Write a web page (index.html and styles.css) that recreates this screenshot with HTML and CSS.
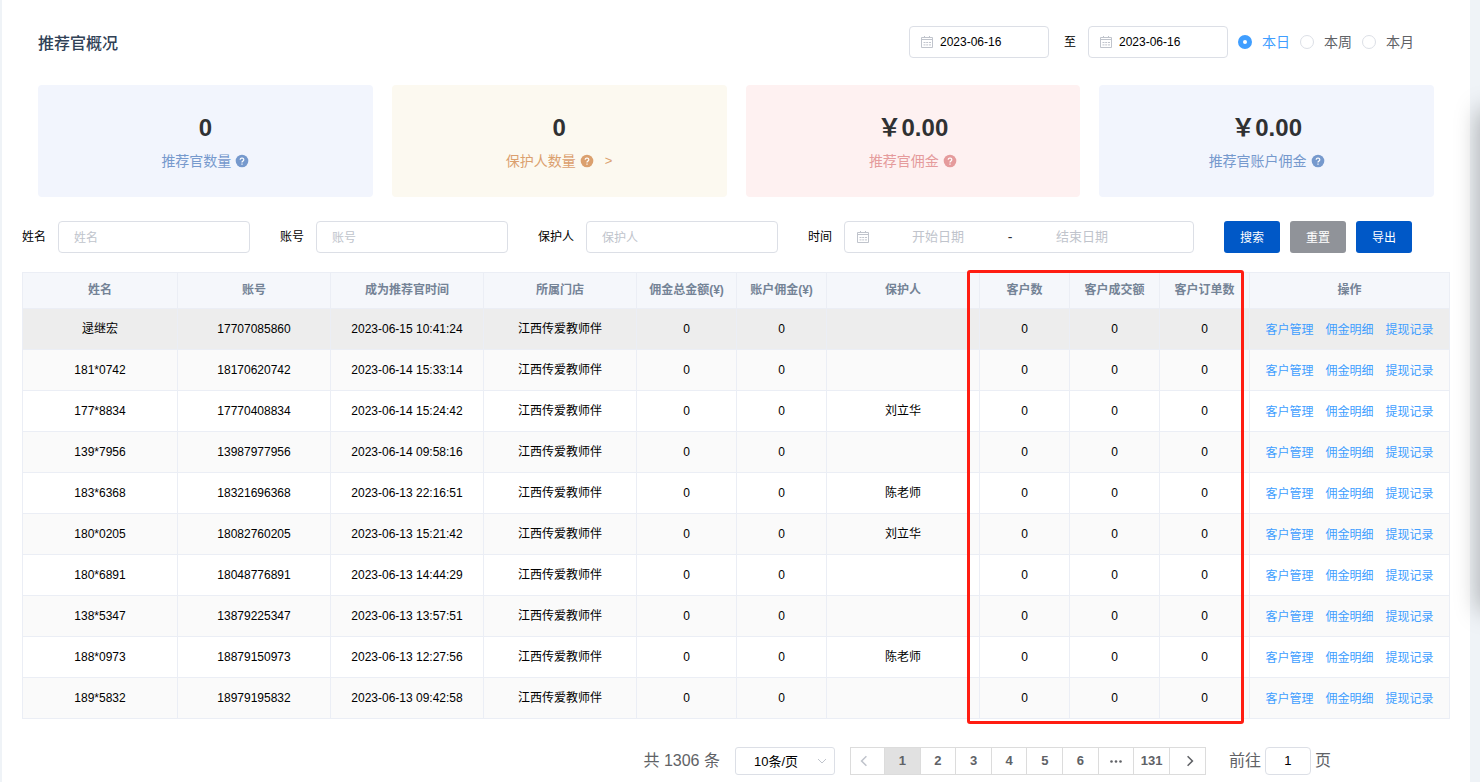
FILE: index.html
```
<!DOCTYPE html>
<html lang="zh-CN">
<head>
<meta charset="utf-8">
<title>推荐官概况</title>
<link rel="stylesheet" href="styles.css">
</head>
<body>
<svg width="0" height="0" class="defs" aria-hidden="true">
  <symbol id="calendar" viewBox="0 0 14 14"><g fill="none" stroke="currentColor"><path d="M1.500 2.500h11v10h-11zM1.500 4.500h11M4.500 1v2M9.500 1v2"/><path d="M3.500 7.500h2M6.200 7.500h2M9 7.500h2M3.500 9.900h2M6.200 9.900h2M9 9.900h2"/></g></symbol>
  <symbol id="help" viewBox="0 0 14 14"><circle cx="7" cy="7" r="6.300" fill="currentColor"/><path d="M5.200 5.700a1.800 1.600 0 1 1 2.700 1.400c-.6.4-.9.600-.9 1.300M7 9.500v1.300" fill="none" stroke="#fff" stroke-width="1.200"/></symbol>
</svg>
<main class="page">
  <header class="overview-head">
    <h1 class="title">推荐官概况</h1>
    <form class="range">
      <span class="date-box"><svg class="icon" aria-hidden="true"><use href="#calendar"/></svg><input type="text" value="2023-06-16" aria-label="开始"></span>
      <span class="to">至</span>
      <span class="date-box"><svg class="icon" aria-hidden="true"><use href="#calendar"/></svg><input type="text" value="2023-06-16" aria-label="结束"></span>
      <div class="radios">
        <label class="radio"><input type="radio" name="period" checked><span>本日</span></label>
        <label class="radio"><input type="radio" name="period"><span>本周</span></label>
        <label class="radio"><input type="radio" name="period"><span>本月</span></label>
      </div>
    </form>
  </header>

  <section class="cards">
    <div class="card blue"><strong class="figure">0</strong><span class="caption">推荐官数量<svg class="icon" aria-hidden="true"><use href="#help"/></svg></span></div>
    <div class="card yellow"><strong class="figure">0</strong><span class="caption">保护人数量<svg class="icon" aria-hidden="true"><use href="#help"/></svg><a class="more" href="#">&gt;</a></span></div>
    <div class="card red"><strong class="figure">&#65509;0.00</strong><span class="caption">推荐官佣金<svg class="icon" aria-hidden="true"><use href="#help"/></svg></span></div>
    <div class="card blue"><strong class="figure">&#65509;0.00</strong><span class="caption">推荐官账户佣金<svg class="icon" aria-hidden="true"><use href="#help"/></svg></span></div>
  </section>

  <form class="filters">
    <div class="field"><label for="name">姓名</label><input class="text" id="name" type="text" placeholder="姓名"></div>
    <div class="field"><label for="account">账号</label><input class="text" id="account" type="text" placeholder="账号"></div>
    <div class="field"><label for="guardian">保护人</label><input class="text" id="guardian" type="text" placeholder="保护人"></div>
    <div class="field"><label for="start">时间</label>
      <div class="date-range"><svg class="icon" aria-hidden="true"><use href="#calendar"/></svg><input id="start" type="text" placeholder="开始日期"><span>-</span><input type="text" placeholder="结束日期" aria-label="结束日期"></div>
    </div>
    <div class="actions"><button class="btn" type="button">搜索</button><button class="btn grey" type="button">重置</button><button class="btn" type="button">导出</button></div>
  </form>

  <div class="table-wrap">
    <table class="table">
      <colgroup><col class="w-name"><col class="w-mid"><col class="w-mid"><col class="w-mid"><col class="w-total"><col class="w-num"><col class="w-mid"><col class="w-num"><col class="w-num"><col class="w-num"><col class="w-ops"></colgroup>
      <thead><tr><th>姓名</th><th>账号</th><th>成为推荐官时间</th><th>所属门店</th><th>佣金总金额(¥)</th><th>账户佣金(¥)</th><th>保护人</th><th>客户数</th><th>客户成交额</th><th>客户订单数</th><th>操作</th></tr></thead>
      <tbody>
        <tr class="hover"><td>逯继宏</td><td>17707085860</td><td>2023-06-15 10:41:24</td><td>江西传爱教师伴</td><td>0</td><td>0</td><td></td><td>0</td><td>0</td><td>0</td><td><div class="ops"><a href="#">客户管理</a><a href="#">佣金明细</a><a href="#">提现记录</a></div></td></tr>
        <tr><td>181*0742</td><td>18170620742</td><td>2023-06-14 15:33:14</td><td>江西传爱教师伴</td><td>0</td><td>0</td><td></td><td>0</td><td>0</td><td>0</td><td><div class="ops"><a href="#">客户管理</a><a href="#">佣金明细</a><a href="#">提现记录</a></div></td></tr>
        <tr><td>177*8834</td><td>17770408834</td><td>2023-06-14 15:24:42</td><td>江西传爱教师伴</td><td>0</td><td>0</td><td>刘立华</td><td>0</td><td>0</td><td>0</td><td><div class="ops"><a href="#">客户管理</a><a href="#">佣金明细</a><a href="#">提现记录</a></div></td></tr>
        <tr><td>139*7956</td><td>13987977956</td><td>2023-06-14 09:58:16</td><td>江西传爱教师伴</td><td>0</td><td>0</td><td></td><td>0</td><td>0</td><td>0</td><td><div class="ops"><a href="#">客户管理</a><a href="#">佣金明细</a><a href="#">提现记录</a></div></td></tr>
        <tr><td>183*6368</td><td>18321696368</td><td>2023-06-13 22:16:51</td><td>江西传爱教师伴</td><td>0</td><td>0</td><td>陈老师</td><td>0</td><td>0</td><td>0</td><td><div class="ops"><a href="#">客户管理</a><a href="#">佣金明细</a><a href="#">提现记录</a></div></td></tr>
        <tr><td>180*0205</td><td>18082760205</td><td>2023-06-13 15:21:42</td><td>江西传爱教师伴</td><td>0</td><td>0</td><td>刘立华</td><td>0</td><td>0</td><td>0</td><td><div class="ops"><a href="#">客户管理</a><a href="#">佣金明细</a><a href="#">提现记录</a></div></td></tr>
        <tr><td>180*6891</td><td>18048776891</td><td>2023-06-13 14:44:29</td><td>江西传爱教师伴</td><td>0</td><td>0</td><td></td><td>0</td><td>0</td><td>0</td><td><div class="ops"><a href="#">客户管理</a><a href="#">佣金明细</a><a href="#">提现记录</a></div></td></tr>
        <tr><td>138*5347</td><td>13879225347</td><td>2023-06-13 13:57:51</td><td>江西传爱教师伴</td><td>0</td><td>0</td><td></td><td>0</td><td>0</td><td>0</td><td><div class="ops"><a href="#">客户管理</a><a href="#">佣金明细</a><a href="#">提现记录</a></div></td></tr>
        <tr><td>188*0973</td><td>18879150973</td><td>2023-06-13 12:27:56</td><td>江西传爱教师伴</td><td>0</td><td>0</td><td>陈老师</td><td>0</td><td>0</td><td>0</td><td><div class="ops"><a href="#">客户管理</a><a href="#">佣金明细</a><a href="#">提现记录</a></div></td></tr>
        <tr><td>189*5832</td><td>18979195832</td><td>2023-06-13 09:42:58</td><td>江西传爱教师伴</td><td>0</td><td>0</td><td></td><td>0</td><td>0</td><td>0</td><td><div class="ops"><a href="#">客户管理</a><a href="#">佣金明细</a><a href="#">提现记录</a></div></td></tr>
      </tbody>
    </table>
    <div class="highlight"></div>
  </div>

  <nav class="pagination" aria-label="分页">
    <span class="total">共 1306 条</span>
    <div class="size"><select aria-label="每页条数"><option>10条/页</option></select><svg class="chevron" viewBox="0 0 10 10" aria-hidden="true"><path d="M1 3l4 4 4-4"/></svg></div>
    <div class="pager">
      <button type="button" class="prev" aria-label="上一页" disabled><svg viewBox="0 0 10 10"><path d="M7 1L3 5l4 4"/></svg></button>
      <button type="button" class="active">1</button><button type="button">2</button><button type="button">3</button><button type="button">4</button><button type="button">5</button><button type="button">6</button>
      <button type="button" aria-label="更多"><svg class="dots" viewBox="0 0 12 10"><circle cx="1.500" cy="5.500" r="1.300"/><circle cx="6" cy="5.500" r="1.300"/><circle cx="10.500" cy="5.500" r="1.300"/></svg></button>
      <button type="button">131</button>
      <button type="button" class="next" aria-label="下一页"><svg viewBox="0 0 10 10"><path d="M3 1l4 4-4 4"/></svg></button>
    </div>
    <label class="jump">前往<input type="text" value="1">页</label>
  </nav>
</main>
<aside class="edge" aria-hidden="true"><div class="edge-shadow"></div></aside>
</body>
</html>
```
FILE: styles.css
```
* { box-sizing: border-box; }
body {
  margin: 0;
  min-height: 100vh;
  display: flex;
  overflow: hidden;
  background: #eff3f7;
  color: #000;
  font: 12px/20px "Liberation Sans", "Noto Sans CJK SC", sans-serif;
}
input, button, select { font: inherit; color: inherit; }
input { min-width: 0; outline: 0; }
input::placeholder { color: #c0c4cc; opacity: 1; }
a { text-decoration: none; color: inherit; }
.defs { position: absolute; }
.icon { width: 14px; height: 14px; flex: none; }

.page { flex: 1; min-width: 0; margin-left: 2px; padding: 26px 20px 0; background: #fff; }

.overview-head { display: flex; justify-content: space-between; align-items: center; padding: 0 36px 0 16px; }
.title { margin: 0; padding-top: 4px; font-size: 16px; font-weight: 500; line-height: 24px; color: #304156; }
.range { display: flex; align-items: center; }
.date-box { display: flex; align-items: center; gap: 6px; width: 140px; height: 32px; padding: 0 10px; border: 1px solid #dcdfe6; border-radius: 4px; color: #c0c4cc; }
.date-box input { width: 100%; padding: 0; border: 0; background: none; color: #000; }
.to { width: 39px; padding-left: 3px; text-align: center; }
.radios { display: flex; gap: 10px; padding-left: 10px; }
.radio { display: flex; align-items: center; gap: 10px; font-size: 14px; color: #606266; }
.radio input { appearance: none; width: 14px; height: 14px; margin: 0; border: 1px solid #dcdfe6; border-radius: 50%; background: #fff; }
.radio input:checked { border: 5px solid #409eff; }
.radio input:checked + span { color: #409eff; }

.cards { display: grid; grid-template-columns: repeat(4, 1fr); gap: 19px; margin: 27px 16px 24px; }
.card { display: flex; flex-direction: column; align-items: center; height: 112px; padding-top: 28px; border-radius: 4px; }
.figure { height: 30px; font-size: 24px; line-height: 30px; color: #303133; }
.caption { display: flex; align-items: center; gap: 4px; margin-top: 8px; font-size: 14px; }
.more { padding-left: 7px; font-size: 13px; }
.blue { background: #f2f5fd; color: #7699cd; }
.yellow { background: #fcf9f0; color: #dba06e; }
.red { background: #fef1f1; color: #e59b9c; }

.filters { display: flex; align-items: center; gap: 30px; margin-bottom: 19px; }
.field { display: flex; align-items: center; gap: 12px; white-space: nowrap; }
.text { width: 192px; height: 32px; padding: 2px 15px 0; border: 1px solid #dcdfe6; border-radius: 4px; background: #fff; }
.date-range { display: flex; align-items: center; width: 350px; height: 32px; padding: 0 11px; border: 1px solid #dcdfe6; border-radius: 4px; color: #c0c4cc; }
.date-range input { flex: 0 1 136px; width: 136px; padding: 0; border: 0; background: none; text-align: center; font-size: 13px; }
.date-range span { width: 8px; text-align: center; color: #303133; font-size: 14px; }
.actions { display: flex; gap: 10px; }
.btn { width: 56px; height: 32px; padding: 2px 0 0; border: 0; border-radius: 3px; background: #0058c7; color: #fff; }
.grey { background: #909399; }

.table-wrap { position: relative; }
.table { width: 100%; table-layout: fixed; border-collapse: collapse; text-align: center; }
.table th, .table td { padding: 0; border: 1px solid #ebeef5; }
.table th { height: 36px; padding-bottom: 2px; background: #f5f7fb; color: #748396; font-weight: 700; white-space: nowrap; }
.table td { height: 41px; }
.table tbody tr:nth-child(even) { background: #fafafa; }
.table tbody .hover { background: #ededed; }
.w-name { width: 155px; }
.w-mid { width: 153px; }
.w-total { width: 100px; }
.w-num { width: 90px; }
.w-ops { width: 200px; }
.ops { display: flex; justify-content: center; gap: 12px; padding-top: 2px; color: #409eff; }
.highlight { position: absolute; top: -2px; bottom: -5px; right: 206px; width: 277px; border: 3px solid #ff1d12; border-radius: 3px; pointer-events: none; }

.pagination { display: flex; align-items: center; justify-content: flex-end; margin-top: 28px; padding-right: 119px; font-size: 16px; line-height: 28px; color: #606266; }
.size { position: relative; margin: 0 15px; }
.size select { appearance: none; display: block; width: 100px; height: 28px; padding: 0 18px; border: 1px solid #dcdfe6; border-radius: 3px; background: #fff; color: #000; font-size: 13px; }
.chevron { position: absolute; top: 9px; right: 8px; width: 10px; height: 10px; fill: none; stroke: #c0c4cc; }
.pager { display: grid; grid-template-columns: 34px repeat(8, 1fr) 36px; width: 355px; }
.pager button { display: flex; align-items: center; justify-content: center; height: 28px; margin-right: -1px; padding: 0; border: 1px solid #dcdcdc; background: #fff; font-size: 13px; font-weight: 700; color: #606266; }
.pager .active { background: #e1e1e1; }
.pager svg { width: 12px; height: 12px; fill: none; stroke: currentColor; stroke-width: 1.300; }
.pager .dots { fill: currentColor; stroke: none; }
.pager .prev { padding-right: 6px; color: #c0c4cc; }
.pager .next { padding-left: 6px; }
.jump { display: flex; gap: 4px; margin-left: 24px; }
.jump input { width: 46px; height: 28px; padding: 0; border: 1px solid #dcdfe6; border-radius: 4px; background: #fff; color: #000; text-align: center; font-size: 13px; }

.edge { width: 10px; padding-top: 110px; }
.edge-shadow { width: 20px; height: 500px; margin-left: 10px; box-shadow: 0 0 24px rgba(0, 0, 0, .35); }
```
